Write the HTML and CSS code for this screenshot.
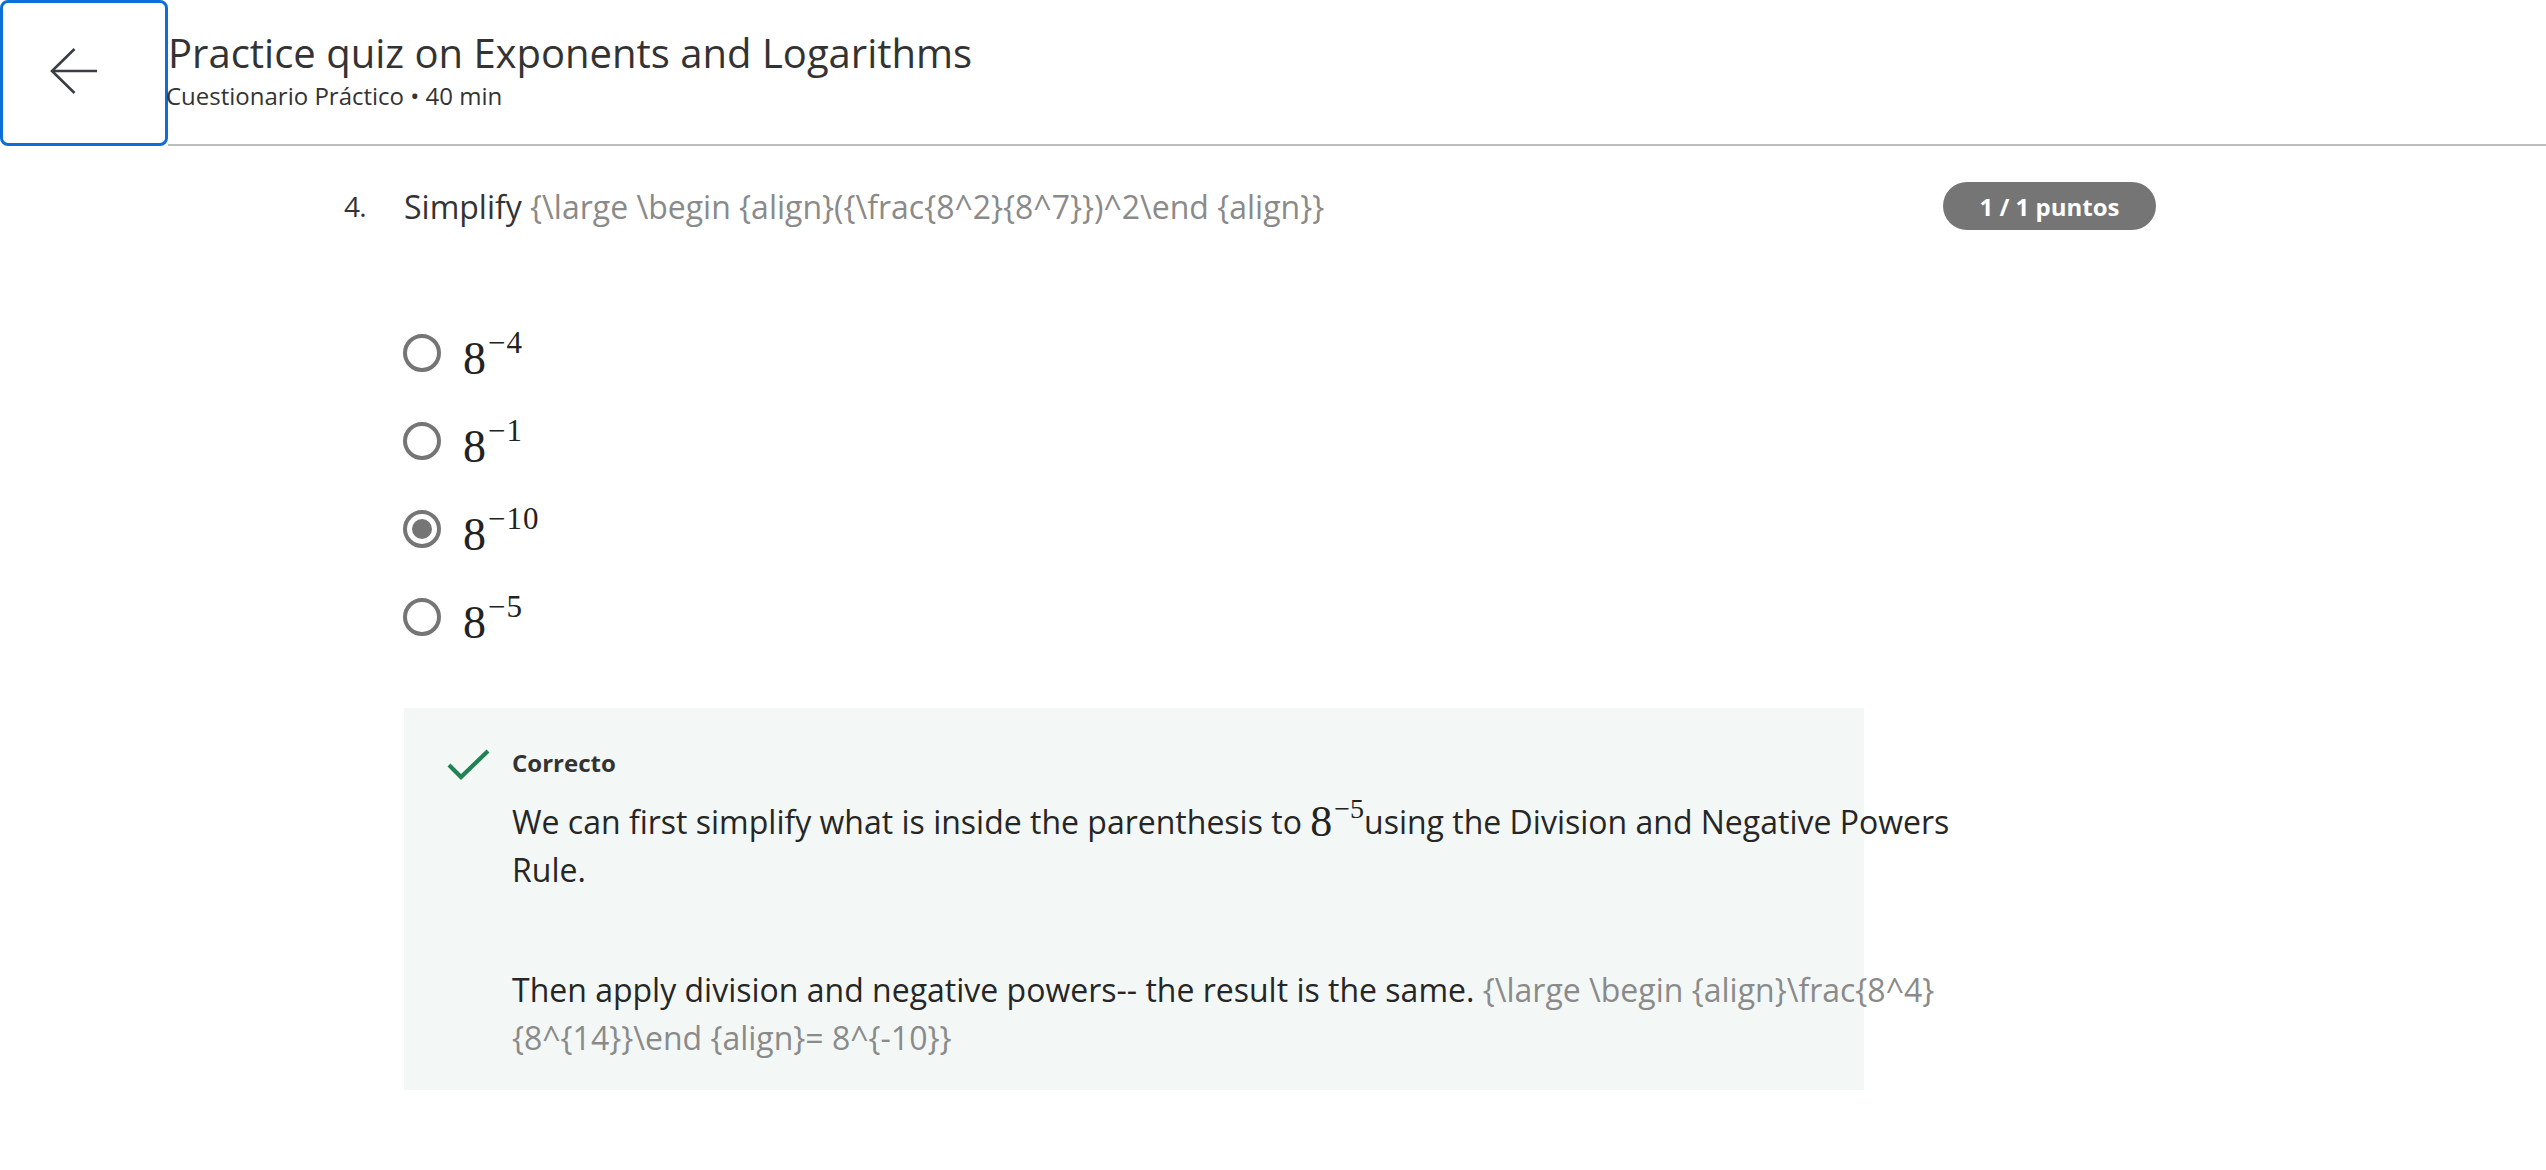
FILE: index.html
```html
<!DOCTYPE html>
<html lang="es">
<head>
<meta charset="utf-8">
<title>Practice quiz on Exponents and Logarithms</title>
<link rel="stylesheet" href="styles.css">
</head>
<body>
<header class="top">
  <button class="back" aria-label="Back">
    <svg width="48" height="48" viewBox="0 0 48 48" fill="none" stroke="#3a3d42" stroke-width="2.6">
      <path d="M47 23H2"/>
      <path d="M24.5 1L2 23l22.5 22"/>
    </svg>
  </button>
  <div class="titles">
    <h1 class="title">Practice quiz on Exponents and Logarithms</h1>
    <div class="sub">Cuestionario Práctico • 40 min</div>
  </div>
</header>
<main class="quiz">
  <div class="qhead">
    <span class="num">4.</span>
    <div class="prompt">Simplify <span class="tex">{\large \begin {align}({\frac{8^2}{8^7}})^2\end {align}}</span></div>
    <span class="badge">1 / 1 puntos</span>
  </div>
  <ul class="options">
    <li class="opt"><span class="radio"></span><span class="math">8<sup>−4</sup></span></li>
    <li class="opt"><span class="radio"></span><span class="math">8<sup>−1</sup></span></li>
    <li class="opt"><span class="radio checked"></span><span class="math">8<sup>−10</sup></span></li>
    <li class="opt"><span class="radio"></span><span class="math">8<sup>−5</sup></span></li>
  </ul>
  <section class="feedback">
    <svg class="check" width="44" height="34" viewBox="0 0 44 34" fill="none" stroke="#1f8354" stroke-width="4.2">
      <path d="M2 17l12 12L41 3"/>
    </svg>
    <div class="fb-body">
      <div class="fb-label">Correcto</div>
      <p class="fb-text">We can first simplify what is inside the parenthesis to <span class="math inl">8<sup>−5</sup></span>using the Division and Negative Powers Rule.</p>
      <p class="fb-text second">Then apply division and negative powers-- the result is the same. <span class="tex">{\large \begin {align}\frac{8^4}{8^{14}}\end {align}= 8^{-10}}</span></p>
    </div>
  </section>
</main>
</body>
</html>
```

FILE: styles.css
```css
* { box-sizing: border-box; }
html, body { margin: 0; padding: 0; background: #ffffff; }
body {
  font-family: "Open Sans", "Liberation Sans", sans-serif;
  color: #333333;
}
.top {
  display: flex;
  align-items: stretch;
  height: 146px;
}
.back {
  width: 168px;
  height: 146px;
  flex: none;
  background: #fff;
  border: 3px solid #0b6ed9;
  border-radius: 8px;
  display: flex;
  align-items: center;
  justify-content: center;
  padding: 0 20px 2px 0;
  margin: 0;
}
.titles {
  flex: 1;
  border-bottom: 2px solid #bdbdbd;
  padding-top: 26px;
}
.title {
  margin: 0;
  font-weight: 400;
  font-size: 40px;
  line-height: 54px;
  letter-spacing: 0;
  color: #333;
}
.sub {
  font-size: 24px;
  line-height: 32px;
  letter-spacing: 0;
  color: #333;
  margin-left: -2px;
}
.quiz {
  padding: 0 0 0 344px;
  width: 2156px;
}
.qhead {
  display: flex;
  align-items: center;
  margin-top: 36px;
  height: 48px;
}
.num {
  width: 60px;
  flex: none;
  font-size: 28px;
  letter-spacing: -0.8px;
}
.prompt {
  flex: 1;
  font-size: 32px;
  letter-spacing: 0;
  color: #333;
}
.tex { color: #8a8a8a; }
.badge {
  flex: none;
  width: 213px;
  height: 48px;
  border-radius: 24px;
  background: #757575;
  color: #fff;
  font-weight: 700;
  font-size: 24px;
  letter-spacing: 0;
  display: flex;
  align-items: center;
  justify-content: center;
}
.options {
  list-style: none;
  margin: 104px 0 0 59px;
  padding: 0;
  display: flex;
  flex-direction: column;
  gap: 50px;
}
.opt {
  display: flex;
  align-items: center;
  height: 38px;
  gap: 22px;
}
.radio {
  width: 38px;
  height: 38px;
  border: 4px solid #757575;
  border-radius: 50%;
  display: flex;
  align-items: center;
  justify-content: center;
  flex: none;
}
.radio.checked::after {
  content: "";
  width: 20px;
  height: 20px;
  border-radius: 50%;
  background: #757575;
}
.math {
  font-family: "Liberation Serif", "DejaVu Serif", serif;
  font-size: 46px;
  color: #222;
  line-height: 1;
  position: relative;
  top: 6px;
}
.math sup {
  font-size: 31px;
  vertical-align: 0;
  position: relative;
  top: -21px;
  margin-left: 2px;
  letter-spacing: 1px;
}
.feedback {
  margin: 72px 0 0 60px;
  width: 1460px;
  height: 382px;
  background: #f3f8f6;
  display: flex;
  padding: 40px 0 0 43px;
  gap: 21px;
}
.check { flex: none; margin-top: 0; }
.fb-body { width: 1455px; flex: none; }
.fb-label {
  font-weight: 700;
  font-size: 24px;
  line-height: 30px;
  letter-spacing: 0;
  color: #333;
}
.fb-text {
  margin: 20px 0 0;
  font-size: 32px;
  line-height: 48px;
  letter-spacing: 0;
  color: #262626;
}
.fb-text.second { margin-top: 72px; }
.math.inl {
  font-size: 44px;
  top: 2px;
}
.math.inl sup { font-size: 28px; top: -18px; letter-spacing: 0; }
```
